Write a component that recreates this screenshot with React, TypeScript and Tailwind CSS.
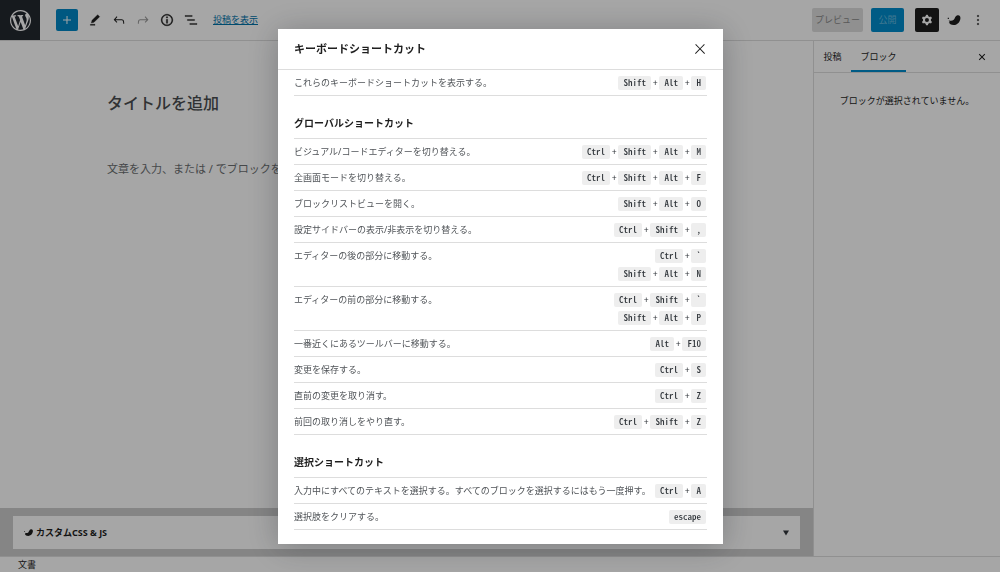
import React from "react";

const ICONS = {
  plus: "M18 11.2h-5.2V6h-1.5v5.2H6v1.5h5.2V18h1.5v-5.2H18z",
  edit: "m19 7-3-3-8.5 8.5-1 4 4-1L19 7Zm-7 11.5H5V20h7v-1.5Z",
  undo: "M18.3 11.7c-.6-.6-1.4-.9-2.3-.9H6.7l2.9-3.3-1.1-1-4.5 5L8.5 16l1-1-2.7-2.7H16c.5 0 .9.2 1.3.5 1 1 1 3.4 1 4.5v.3h1.5v-.2c0-1.5 0-4.3-1.5-5.7z",
  redo: "M15.6 6.5l-1.1 1 2.9 3.3H8c-.9 0-1.7.3-2.3.9-1.4 1.5-1.4 4.2-1.4 5.6v.2h1.5v-.3c0-1.1 0-3.5 1-4.5.3-.3.7-.5 1.3-.5h9.2L14.5 15l1.1 1.1 4.6-4.6-4.6-5z",
  info: "M12 3.2c-4.8 0-8.8 3.9-8.8 8.8 0 4.8 3.9 8.8 8.8 8.8 4.8 0 8.8-3.9 8.8-8.8 0-4.8-4-8.8-8.8-8.8zm0 16c-4 0-7.2-3.3-7.2-7.2C4.8 8 8 4.8 12 4.8s7.2 3.3 7.2 7.2c0 4-3.2 7.2-7.2 7.2zM11 17h2v-6h-2v6zm0-8h2V7h-2v2z",
  list: "M13.8 5.2H3v1.5h10.8V5.2zm-3.6 12v1.5H21v-1.5H10.2zm7.2-6H6.6v1.5h10.8v-1.5z",
  cog: "M10.289 4.836A1 1 0 0111.275 4h1.306a1 1 0 01.987.836l.244 1.466c.787.26 1.503.679 2.108 1.218l1.393-.522a1 1 0 011.216.437l.653 1.13a1 1 0 01-.23 1.273l-1.148.944a6.025 6.025 0 010 2.435l1.149.946a1 1 0 01.23 1.272l-.653 1.13a1 1 0 01-1.216.437l-1.394-.522c-.605.54-1.32.958-2.108 1.218l-.244 1.466a1 1 0 01-.987.836h-1.306a1 1 0 01-.986-.836l-.244-1.466a5.995 5.995 0 01-2.108-1.218l-1.394.522a1 1 0 01-1.217-.436l-.653-1.131a1 1 0 01.23-1.272l1.149-.946a6.026 6.026 0 010-2.435l-1.148-.944a1 1 0 01-.23-1.272l.653-1.131a1 1 0 011.217-.437l1.393.522a5.994 5.994 0 012.108-1.218l.244-1.466zM14.929 12a3 3 0 11-6 0 3 3 0 016 0z",
  more: "M13 19h-2v-2h2v2zm0-6h-2v-2h2v2zm0-6h-2V5h2v2z",
  close: "M13 11.8l6.1-6.3-1-1-6.1 6.2-6.1-6.2-1 1 6.1 6.3-6.5 6.7 1 1 6.5-6.6 6.5 6.6 1-1z",
  closeSmall: "M12 13.06l3.712 3.713 1.061-1.06L13.061 12l3.712-3.712-1.06-1.06L12 10.938 8.288 7.227l-1.061 1.06L10.939 12l-3.712 3.712 1.06 1.061L12 13.061z",
  bird: "M2.6 8.6 h1.8 v1.8 h-1.8z M4 12.4 C6.6 13.6 9.6 13.4 11.6 11.8 C13.4 10 13.6 5.8 17.2 5 C20.4 4.4 22 6.6 21.6 10 C20.8 15.6 16.4 19.6 11.4 19.6 C7.6 19.6 5 17.8 4.2 15.4 L6 15.2 C5 14.4 4.4 13.6 4 12.4 Z",
};

const WP_LOGO =
  "M20 10c0-5.51-4.49-10-10-10C4.48 0 0 4.49 0 10c0 5.52 4.48 10 10 10 5.51 0 10-4.48 10-10zM7.78 15.37L4.37 6.22c.55-.02 1.17-.08 1.17-.08.5-.06.44-1.13-.06-1.11 0 0-1.45.11-2.37.11-.18 0-.37 0-.58-.01C4.12 2.69 6.87 1.11 10 1.11c2.33 0 4.45.87 6.05 2.34-.68-.11-1.65.39-1.65 1.58 0 .74.45 1.36.9 2.1.35.61.55 1.36.55 2.46 0 1.49-1.4 5-1.4 5l-3.03-8.37c.54-.02.82-.17.82-.17.5-.05.44-1.25-.06-1.22 0 0-1.44.12-2.38.12-.87 0-2.33-.12-2.33-.12-.5-.03-.56 1.2-.06 1.22l.92.08 1.26 3.41zM17.41 10c.24-.64.74-1.87.43-4.25.7 1.29 1.05 2.71 1.05 4.25 0 3.29-1.73 6.24-4.4 7.78.97-2.59 1.94-5.2 2.92-7.78zM6.1 18.09C3.12 16.65 1.11 13.53 1.11 10c0-1.3.23-2.48.72-3.59C3.25 10.3 4.67 14.2 6.1 18.09zm4.03-6.63l2.58 6.98c-.86.29-1.76.45-2.71.45-.79 0-1.57-.11-2.29-.33.81-2.38 1.62-4.74 2.42-7.1z";

function Icon({ name, className = "size-4" }: { name: keyof typeof ICONS; className?: string }) {
  return (
    <svg viewBox="0 0 24 24" fill="currentColor" fillRule="evenodd" className={className} aria-hidden="true">
      <path d={ICONS[name]} />
    </svg>
  );
}

function IconButton({ name, label, className = "" }: { name: keyof typeof ICONS; label: string; className?: string }) {
  return (
    <button type="button" aria-label={label} className={`flex size-6 items-center justify-center rounded-xs ${className}`}>
      <Icon name={name} />
    </button>
  );
}

type Shortcut = { text: string; keys: string[][] };

const MAIN: Shortcut[] = [{ text: "これらのキーボードショートカットを表示する。", keys: [["Shift", "Alt", "H"]] }];

const GLOBAL: Shortcut[] = [
  { text: "ビジュアル/コードエディターを切り替える。", keys: [["Ctrl", "Shift", "Alt", "M"]] },
  { text: "全画面モードを切り替える。", keys: [["Ctrl", "Shift", "Alt", "F"]] },
  { text: "ブロックリストビューを開く。", keys: [["Shift", "Alt", "O"]] },
  { text: "設定サイドバーの表示/非表示を切り替える。", keys: [["Ctrl", "Shift", ","]] },
  { text: "エディターの後の部分に移動する。", keys: [["Ctrl", "`"], ["Shift", "Alt", "N"]] },
  { text: "エディターの前の部分に移動する。", keys: [["Ctrl", "Shift", "`"], ["Shift", "Alt", "P"]] },
  { text: "一番近くにあるツールバーに移動する。", keys: [["Alt", "F10"]] },
  { text: "変更を保存する。", keys: [["Ctrl", "S"]] },
  { text: "直前の変更を取り消す。", keys: [["Ctrl", "Z"]] },
  { text: "前回の取り消しをやり直す。", keys: [["Ctrl", "Shift", "Z"]] },
];

const SELECTION: Shortcut[] = [
  { text: "入力中にすべてのテキストを選択する。すべてのブロックを選択するにはもう一度押す。", keys: [["Ctrl", "A"]] },
  { text: "選択肢をクリアする。", keys: [["escape"]] },
];

function ShortcutList({ items, first = false }: { items: Shortcut[]; first?: boolean }) {
  return (
    <ul className={first ? "" : "border-t border-[#dddddd]"}>
      {items.map((item) => (
        <li key={item.text} className="flex items-start justify-between border-b border-[#dddddd] pt-[6px] pb-[5px]">
          <span className="min-w-0 flex-1 whitespace-nowrap text-[9px] leading-[14px] text-[#505458]">{item.text}</span>
          <div className="flex flex-col items-end gap-1 pr-px">
            {item.keys.map((combo) => (
              <kbd
                key={combo.join("+")}
                className="flex h-[14px] items-center gap-[2px] font-['Noto_Sans_CJK_JP',monospace] text-[9px] leading-[14px] text-[#32373c] [font-feature-settings:'hwid']"
              >
                {combo.map((key, i) => (
                  <React.Fragment key={key}>
                    {i > 0 && <span>+</span>}
                    <kbd className="rounded-xs bg-[#eeeeee] px-[5px] font-['Noto_Sans_CJK_JP',monospace] font-medium [font-feature-settings:'hwid']">
                      {key}
                    </kbd>
                  </React.Fragment>
                ))}
              </kbd>
            ))}
          </div>
        </li>
      ))}
    </ul>
  );
}

function SectionTitle({ children }: { children: React.ReactNode }) {
  return <h2 className="pt-5 pb-2 text-[10px] leading-[14px] font-bold text-[#1e1e1e]">{children}</h2>;
}

function TopBar() {
  return (
    <header className="flex h-[41px] items-stretch border-b border-[#dddddd]">
      <a href="#posts" aria-label="WordPress" className="flex w-10 items-center justify-center bg-[#23282e] text-white">
        <svg viewBox="0 0 20 20" fill="currentColor" className="size-[21px]" aria-hidden="true">
          <path d={WP_LOGO} />
        </svg>
      </a>
      <div className="flex flex-1 items-center pl-4">
        <button type="button" aria-label="ブロックを追加" className="mr-[5px] flex size-[22px] items-center justify-center rounded-xs bg-[#0088c6] text-white">
          <Icon name="plus" />
        </button>
        <IconButton name="edit" label="ツール" className="stroke-current stroke-[0.5]" />
        <IconButton name="undo" label="元に戻す" />
        <IconButton name="redo" label="やり直し" className="text-[#999999]" />
        <IconButton name="info" label="詳細" className="stroke-current stroke-[0.5]" />
        <IconButton name="list" label="リスト表示" className="stroke-current stroke-[0.5]" />
        <a href="#view" className="ml-[10px] text-[9px] leading-[14px] text-[#0073aa] underline">
          投稿を表示
        </a>
      </div>
      <div className="flex items-center pr-[10px] text-[9px]">
        <button type="button" disabled className="mr-2 h-6 w-[51px] rounded-xs bg-[#dddddd] text-center text-[#8a8a8a]">
          プレビュー
        </button>
        <button type="button" className="mr-[11px] h-6 w-[33px] rounded-xs bg-[#008dcc] text-center text-[#66b9e0]">
          公開
        </button>
        <IconButton name="cog" label="設定" className="bg-[#1e1e1e] text-white" />
        <IconButton name="bird" label="カスタム CSS & JS" className="ml-[3px]" />
        <IconButton name="more" label="オプション" className="stroke-current stroke-[0.5]" />
      </div>
    </header>
  );
}

function Sidebar() {
  return (
    <aside className="w-[187px] border-l border-[#dddddd] text-[9px]">
      <div className="flex h-8 items-stretch border-b border-[#dddddd]">
        <button type="button" className="w-[37px]">投稿</button>
        <button type="button" className="w-[55px] border-y-2 border-t-transparent border-b-[#008dcc]">ブロック</button>
        <button type="button" aria-label="設定を閉じる" className="mr-[10px] ml-auto flex w-4 items-center justify-center">
          <Icon name="closeSmall" />
        </button>
      </div>
      <p className="pt-[21px] text-center leading-[14px]">ブロックが選択されていません。</p>
    </aside>
  );
}

function Editor() {
  return (
    <main className="flex min-w-0 flex-1 flex-col">
      <div className="flex-1 px-[107px] pt-[50px]">
        <h1 className="text-base leading-6 font-medium text-[#4a4d50]">タイトルを追加</h1>
        <p className="mt-[46px] text-[11px] leading-4 text-[#6c6f72]">文章を入力、または / でブロックを選択</p>
      </div>
      <div className="bg-[#cccccc] pt-2 pr-[13px] pb-[7px] pl-[13px]">
        <section className="flex h-[33px] items-center bg-white pr-[11px] pl-[10px]">
          <Icon name="bird" className="mr-[2px] size-[11px]" />
          <h2 className="text-[9px] font-bold">カスタムCSS &amp; JS</h2>
          <button type="button" aria-label="パネルを切り替え" className="ml-auto text-[#32373c]">
            <svg viewBox="0 0 6 6" className="size-[6px]" fill="currentColor" aria-hidden="true">
              <path d="M0 .5h6L3 5.5z" />
            </svg>
          </button>
        </section>
      </div>
    </main>
  );
}

function ShortcutsDialog() {
  return (
    <div className="fixed inset-0 flex items-start justify-center bg-black/35 pt-[29px] pl-px">
      <div role="dialog" aria-modal="true" aria-labelledby="dialog-title" className="w-[445px] bg-white shadow-[0_3px_30px_rgba(25,30,35,0.3)]">
        <div className="flex h-[41px] items-center justify-between border-b border-[#dddddd] pr-[15px] pl-4">
          <h1 id="dialog-title" className="text-[11px] font-bold text-[#1e1e1e]">キーボードショートカット</h1>
          <button type="button" aria-label="ダイアログを閉じる" className="text-[#1e1e1e]">
            <Icon name="close" />
          </button>
        </div>
        <div className="px-4 pb-[14px]">
          <ShortcutList items={MAIN} first />
          <SectionTitle>グローバルショートカット</SectionTitle>
          <ShortcutList items={GLOBAL} />
          <SectionTitle>選択ショートカット</SectionTitle>
          <ShortcutList items={SELECTION} />
        </div>
      </div>
    </div>
  );
}

export default function App() {
  return (
    <div className="flex min-h-screen flex-col bg-white font-['Noto_Sans','Noto_Sans_CJK_JP',sans-serif] text-[#1e1e1e]" lang="ja">
      <TopBar />
      <div className="flex flex-1 items-stretch">
        <Editor />
        <Sidebar />
      </div>
      <footer className="border-t border-[#dddddd] pl-[18px] text-[9px] leading-[15px]">文書</footer>
      <ShortcutsDialog />
    </div>
  );
}
